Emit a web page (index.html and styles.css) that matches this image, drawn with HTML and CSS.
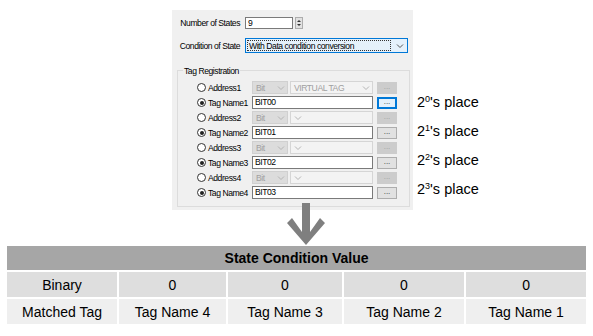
FILE: index.html
```html
<!DOCTYPE html>
<html lang="en">
<head>
    <meta charset="UTF-8">
    <title>State Condition</title>
    <link rel="stylesheet" href="styles.css">
</head>
<body>
<div class="page">
    <div class="top">
        <div class="dialog">
            <div class="field field-num">
                <span class="lbl">Number of States</span>
                <span class="num">9</span>
                <span class="spin">
                    <svg width="6" height="10" viewBox="0 0 6 10"><path d="M1 4 L3 2 L5 4 Z M1 6 L3 8 L5 6 Z" fill="#333"/></svg>
                </span>
            </div>
            <div class="field field-cond">
                <span class="lbl">Condition of State</span>
                <span class="combo focus">
                    <span class="combo-text">With Data condition conversion</span>
                    <svg class="chev" width="8" height="6" viewBox="0 0 8 6"><path d="M1 1.5 L4 4.5 L7 1.5" fill="none" stroke="#555" stroke-width="1"/></svg>
                </span>
            </div>

            <div class="group">
                <div class="group-title">Tag Registration</div>
                <div class="rows">
                    <div class="row">
                        <span class="radio"></span><span class="rlbl">Address1</span>
                        <span class="sel small">Bit<svg class="chev" width="8" height="6" viewBox="0 0 8 6"><path d="M1 1.5 L4 4.5 L7 1.5" fill="none" stroke="#b5b5b5"/></svg></span>
                        <span class="sel big">VIRTUAL TAG<svg class="chev" width="8" height="6" viewBox="0 0 8 6"><path d="M1 1.5 L4 4.5 L7 1.5" fill="none" stroke="#b5b5b5"/></svg></span>
                        <span class="btn off">...</span>
                    </div>
                    <div class="row">
                        <span class="radio on"></span><span class="rlbl">Tag Name1</span>
                        <span class="txt">BIT00</span>
                        <span class="btn focus">...</span>
                    </div>
                    <div class="row">
                        <span class="radio"></span><span class="rlbl">Address2</span>
                        <span class="sel small">Bit<svg class="chev" width="8" height="6" viewBox="0 0 8 6"><path d="M1 1.5 L4 4.5 L7 1.5" fill="none" stroke="#b5b5b5"/></svg></span>
                        <span class="sel big"><svg class="chev" width="8" height="6" viewBox="0 0 8 6"><path d="M1 1.5 L4 4.5 L7 1.5" fill="none" stroke="#b5b5b5"/></svg></span>
                        <span class="btn off">...</span>
                    </div>
                    <div class="row">
                        <span class="radio on"></span><span class="rlbl">Tag Name2</span>
                        <span class="txt">BIT01</span>
                        <span class="btn">...</span>
                    </div>
                    <div class="row">
                        <span class="radio"></span><span class="rlbl">Address3</span>
                        <span class="sel small">Bit<svg class="chev" width="8" height="6" viewBox="0 0 8 6"><path d="M1 1.5 L4 4.5 L7 1.5" fill="none" stroke="#b5b5b5"/></svg></span>
                        <span class="sel big"><svg class="chev" width="8" height="6" viewBox="0 0 8 6"><path d="M1 1.5 L4 4.5 L7 1.5" fill="none" stroke="#b5b5b5"/></svg></span>
                        <span class="btn off">...</span>
                    </div>
                    <div class="row">
                        <span class="radio on"></span><span class="rlbl">Tag Name3</span>
                        <span class="txt">BIT02</span>
                        <span class="btn">...</span>
                    </div>
                    <div class="row">
                        <span class="radio"></span><span class="rlbl">Address4</span>
                        <span class="sel small">Bit<svg class="chev" width="8" height="6" viewBox="0 0 8 6"><path d="M1 1.5 L4 4.5 L7 1.5" fill="none" stroke="#b5b5b5"/></svg></span>
                        <span class="sel big"><svg class="chev" width="8" height="6" viewBox="0 0 8 6"><path d="M1 1.5 L4 4.5 L7 1.5" fill="none" stroke="#b5b5b5"/></svg></span>
                        <span class="btn off">...</span>
                    </div>
                    <div class="row">
                        <span class="radio on"></span><span class="rlbl">Tag Name4</span>
                        <span class="txt">BIT03</span>
                        <span class="btn">...</span>
                    </div>
                </div>
            </div>
        </div>

        <ul class="places">
            <li>2<sup>0</sup>'s place</li>
            <li>2<sup>1</sup>'s place</li>
            <li>2<sup>2</sup>'s place</li>
            <li>2<sup>3</sup>'s place</li>
        </ul>
    </div>

    <!-- down arrow sits over the bottom edge of the dialog -->
    <svg class="arrow" width="45" height="48" viewBox="0 0 45 48">
        <polygon points="17,3 25,3 25,32 35,18 40,23 21,45 2,23 7,18 17,32" fill="#7f7f7f"/>
    </svg>

    <table class="cond">
        <colgroup>
            <col class="w1"><col class="w2"><col class="w3"><col class="w4"><col class="w5">
        </colgroup>
        <tr class="head">
            <th colspan="5">State Condition Value</th>
        </tr>
        <tr class="bin">
            <td>Binary</td><td>0</td><td>0</td><td>0</td><td>0</td>
        </tr>
        <tr class="tag">
            <td>Matched Tag</td><td>Tag Name 4</td><td>Tag Name 3</td><td>Tag Name 2</td><td>Tag Name 1</td>
        </tr>
    </table>
</div>
</body>
</html>
```

FILE: styles.css
```css
body {
  margin: 0;
  background: #fff;
  font-family: "Liberation Sans", Arial, sans-serif;
  color: #000;
}

.page {
  position: relative;
  width: 593px;
  height: 336px;
  padding-top: 10px;
  box-sizing: border-box;
}

.top {
  display: flex;
  align-items: flex-start;
}

/* ---- dialog ---- */
.dialog {
  margin-left: 172px;
  width: 241px;
  height: 200px;
  box-sizing: border-box;
  padding: 7px 3px 4px 5px;
  background: #f0f0f0;
  font-size: 8.6px;
  letter-spacing: -0.45px;
}

.field {
  display: flex;
  align-items: center;
}

.lbl {
  width: 63px;
  text-align: right;
  margin-right: 5px;
  white-space: nowrap;
}

.field-num {
  height: 12px;
}

.num {
  width: 48px;
  height: 12px;
  box-sizing: border-box;
  background: #fff;
  border: 1px solid #7a7a7a;
  padding-left: 2px;
  line-height: 10px;
}

.spin {
  width: 8px;
  height: 12px;
  margin-left: 2px;
  box-sizing: border-box;
  background: #e1e1e1;
  border: 1px solid #adadad;
  display: flex;
  align-items: center;
  justify-content: center;
}

.field-cond {
  height: 15px;
  margin-top: 9px;
}

.combo {
  width: 163px;
  height: 15px;
  box-sizing: border-box;
  display: flex;
  align-items: center;
  background: #e5f1fb;
  border: 1px solid #0078d7;
  padding: 1px;
}

.combo-text {
  flex: 1;
  height: 11px;
  line-height: 10px;
  border: 1px dotted #333;
  box-sizing: border-box;
  padding-left: 1px;
  margin-right: 5px;
}

.combo .chev {
  margin-right: 2px;
}

/* ---- group box ---- */
.group {
  margin-top: 17px;
  border: 1px solid #dcdcdc;
  height: 137px;
  box-sizing: border-box;
}

.group-title {
  display: table;
  margin: -5px 0 0 5px;
  padding: 0 1px;
  line-height: 10px;
  background: #f0f0f0;
}

.rows {
  margin-top: 4px;
  padding-left: 19px;
}

.row {
  height: 15px;
  display: flex;
  align-items: center;
}

.radio {
  width: 9px;
  height: 9px;
  box-sizing: border-box;
  border: 1px solid #333;
  border-radius: 50%;
  background: #fff;
  position: relative;
}

.radio.on::after {
  content: "";
  position: absolute;
  left: 1.5px;
  top: 1.5px;
  width: 4px;
  height: 4px;
  border-radius: 50%;
  background: #222;
}

.rlbl {
  width: 44px;
  margin-left: 2px;
  white-space: nowrap;
}

.sel {
  height: 13px;
  box-sizing: border-box;
  display: flex;
  align-items: center;
  justify-content: space-between;
  padding: 0 2px 0 3px;
  color: #a0a0a0;
}

.sel.small {
  width: 36px;
  background: #dcdcdc;
  border: 1px solid #d0d0d0;
}

.sel.big {
  width: 83px;
  margin-left: 2px;
  background: #f3f3f3;
  border: 1px solid #d5d5d5;
}

.txt {
  width: 121px;
  height: 13px;
  box-sizing: border-box;
  background: #fff;
  border: 1px solid #7a7a7a;
  padding-left: 2px;
  line-height: 11px;
}

.btn {
  width: 20px;
  height: 12px;
  margin-left: 4px;
  box-sizing: border-box;
  background: #e1e1e1;
  border: 1px solid #adadad;
  text-align: center;
  line-height: 8px;
  font-size: 8px;
  letter-spacing: 0;
  color: #333;
}

.btn.off {
  background: #cccccc;
  border-color: #cccccc;
  color: #a0a0a0;
}

.btn.focus {
  background: #e5f1fb;
  border: 1px solid #0078d7;
  box-shadow: inset 0 0 0 1px #0078d7;
}

/* ---- place labels ---- */
.places {
  list-style: none;
  margin: 0 0 0 4px;
  padding: 78px 0 0 0;
  font-size: 14.5px;
}

.places li {
  height: 29px;
  line-height: 29px;
  white-space: nowrap;
}

.places sup {
  font-size: 9px;
  line-height: 0;
  vertical-align: 5px;
}

/* ---- arrow ---- */
.arrow {
  position: absolute;
  left: 285px;
  top: 200px;
}

/* ---- table ---- */
.cond {
  margin: 34px 0 0 5px;
  border-collapse: separate;
  border-spacing: 2px;
  table-layout: fixed;
  width: 583px;
  font-size: 14px;
}

.cond th,
.cond td {
  padding: 0;
  text-align: center;
}

.w1 { width: 110px; }
.w2 { width: 107px; }
.w3 { width: 114px; }
.w4 { width: 120px; }
.w5 { width: 120px; }

.head th {
  height: 24px;
  background: #a6a6a6;
  font-weight: bold;
}

.bin td {
  height: 25px;
  background: #dedede;
}

.tag td {
  height: 25px;
  background: #efefef;
}
```
